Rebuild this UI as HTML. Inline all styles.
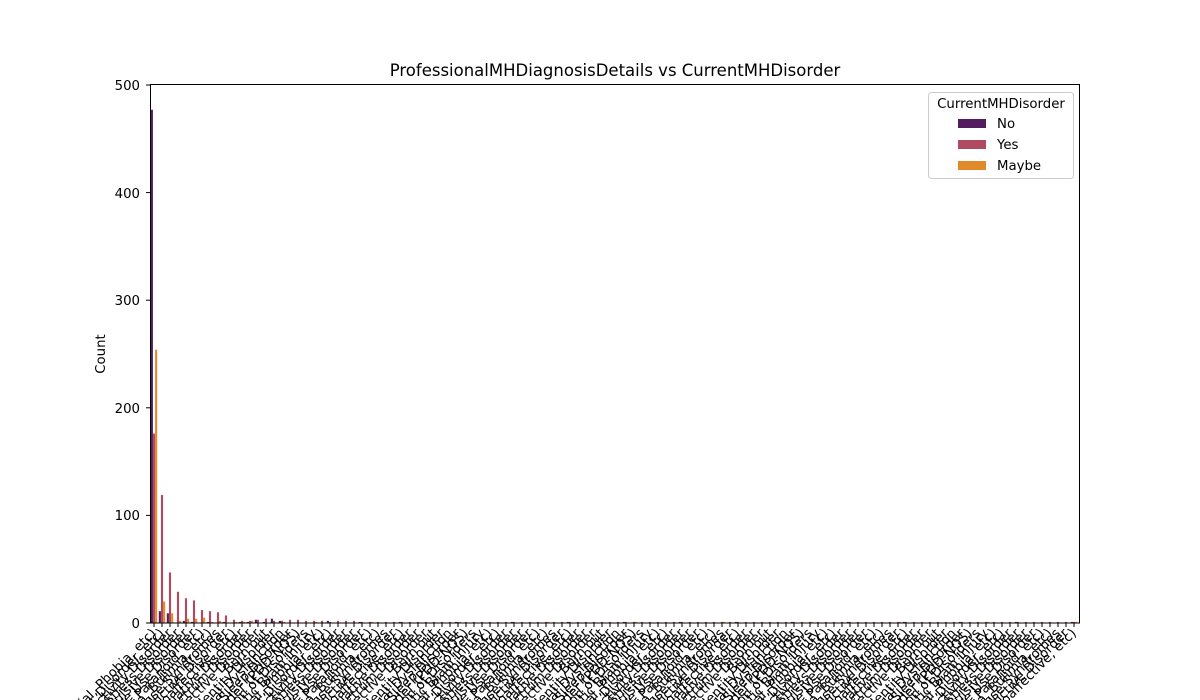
<!DOCTYPE html>
<html><head><meta charset="utf-8"><style>
html,body{margin:0;padding:0;background:#fff;width:1200px;height:700px;overflow:hidden;}
svg{display:block;font-family:"DejaVu Sans","Liberation Sans",sans-serif;}
</style></head><body>
<svg id="s" width="1200" height="700" xmlns="http://www.w3.org/2000/svg">
<text x="615" y="76" font-size="16.5" text-anchor="middle" fill="#000">ProfessionalMHDiagnosisDetails vs CurrentMHDisorder</text>
<g id="bars"></g>
<rect x="150.5" y="84.5" width="929" height="538.5" fill="none" stroke="#000" stroke-width="1"/>
<g font-size="13.3" text-anchor="end" fill="#000">
<text x="140" y="628">0</text>
<text x="140" y="520">100</text>
<text x="140" y="305">300</text>
<text x="140" y="413">200</text>
<text x="140" y="90">500</text>
<text x="140" y="198">400</text>
</g>
<g stroke="#000">
<line x1="146" x2="150" y1="623" y2="623"/><line x1="146" x2="150" y1="515.4" y2="515.4"/>
<line x1="146" x2="150" y1="407.8" y2="407.8"/><line x1="146" x2="150" y1="300.2" y2="300.2"/>
<line x1="146" x2="150" y1="192.6" y2="192.6"/><line x1="146" x2="150" y1="85" y2="85"/>
</g>
<text transform="translate(105,354) rotate(-90)" font-size="13.3" text-anchor="middle">Count</text>
<g id="labels" font-size="13.3" text-anchor="end" fill="#000"></g>
<rect x="928.5" y="92.5" width="145" height="86" rx="3" fill="#fff" stroke="#ccc"/>
<text x="1001" y="108" font-size="13.3" text-anchor="middle">CurrentMHDisorder</text>
<rect x="958" y="119" width="28" height="9" fill="#521c5f"/>
<rect x="958" y="140" width="28" height="9" fill="#b04a60"/>
<rect x="958" y="161" width="28" height="9" fill="#e08a2a"/>
<text x="997" y="128" font-size="13.3">No</text>
<text x="997" y="149" font-size="13.3">Yes</text>
<text x="997" y="170" font-size="13.3">Maybe</text>
</svg>
<script>
var NS="http://www.w3.org/2000/svg";
var N=116,x0=154,dx=8,k=1.076,base=623;
var data=[[477,176,254],[11,119,20],[9,47,9],[0,29,2],[2,23,4],[1,21,4],[0,12,5],[1,11,1],[0,10,2],[1,7,0],[0,3,1],[1,2,1],[1,2,2],[3,3,0],[1,4,0],[4,2,0],[2,2,1],[0,3,0],[0,3,0],[0,2,0],[0,2,1],[0,2,0],[2,1,0],[0,2,0],[0,2,0],[0,2,0],[1,1,0]];
var labs=["Anxiety Disorder (Generalized, Social, Phobia, etc)","Mood Disorder (Depression, Bipolar Disorder, etc)","Attention Deficit Hyperactivity Disorder","Post-traumatic Stress Disorder","Obsessive-Compulsive Disorder","Substance Use Disorder","Personality Disorder (Borderline, Antisocial, Paranoid, etc)","Eating Disorder (Anorexia, Bulimia, etc)","Stress Response Syndromes","Addictive Disorder","Psychotic Disorder (Schizophrenia, Schizoaffective, etc)","Dissociative Disorder","Autism Spectrum Disorder","Seasonal Affective Disorder","Burn out","Gender Identity Disorder","Sexual Dysfunction","Sleep Disorder","Pervasive Developmental Disorder (PDD-NOS)","Combination of Disorders","Traumatic Brain Injury"];
var g=document.getElementById("bars"),L=document.getElementById("labels");
var cols=["#521c5f","#b04a60","#e08a2a"];
for(var i=0;i<N;i++){
 var d=data[i]||[(i%7==3)?1:0,1,(i%11==5)?1:0];
 var cx=x0+i*dx;
 for(var j=0;j<3;j++){
  var h=d[j]*k; if(h<=0)continue;
  var r=document.createElementNS(NS,"rect");
  r.setAttribute("x",cx-3.2+j*2.13);r.setAttribute("width",2.13);
  r.setAttribute("y",base-h);r.setAttribute("height",h);r.setAttribute("fill",cols[j]);
  g.appendChild(r);
 }
 var t=document.createElementNS(NS,"line");
 t.setAttribute("x1",cx);t.setAttribute("x2",cx);t.setAttribute("y1",623);t.setAttribute("y2",627);t.setAttribute("stroke","#000");
 g.appendChild(t);
 var tx=document.createElementNS(NS,"text");
 tx.setAttribute("transform","translate("+(cx+3)+",634) rotate(-45)");
 tx.textContent=labs[i%labs.length];
 L.appendChild(tx);
}
</script>
</body></html>
